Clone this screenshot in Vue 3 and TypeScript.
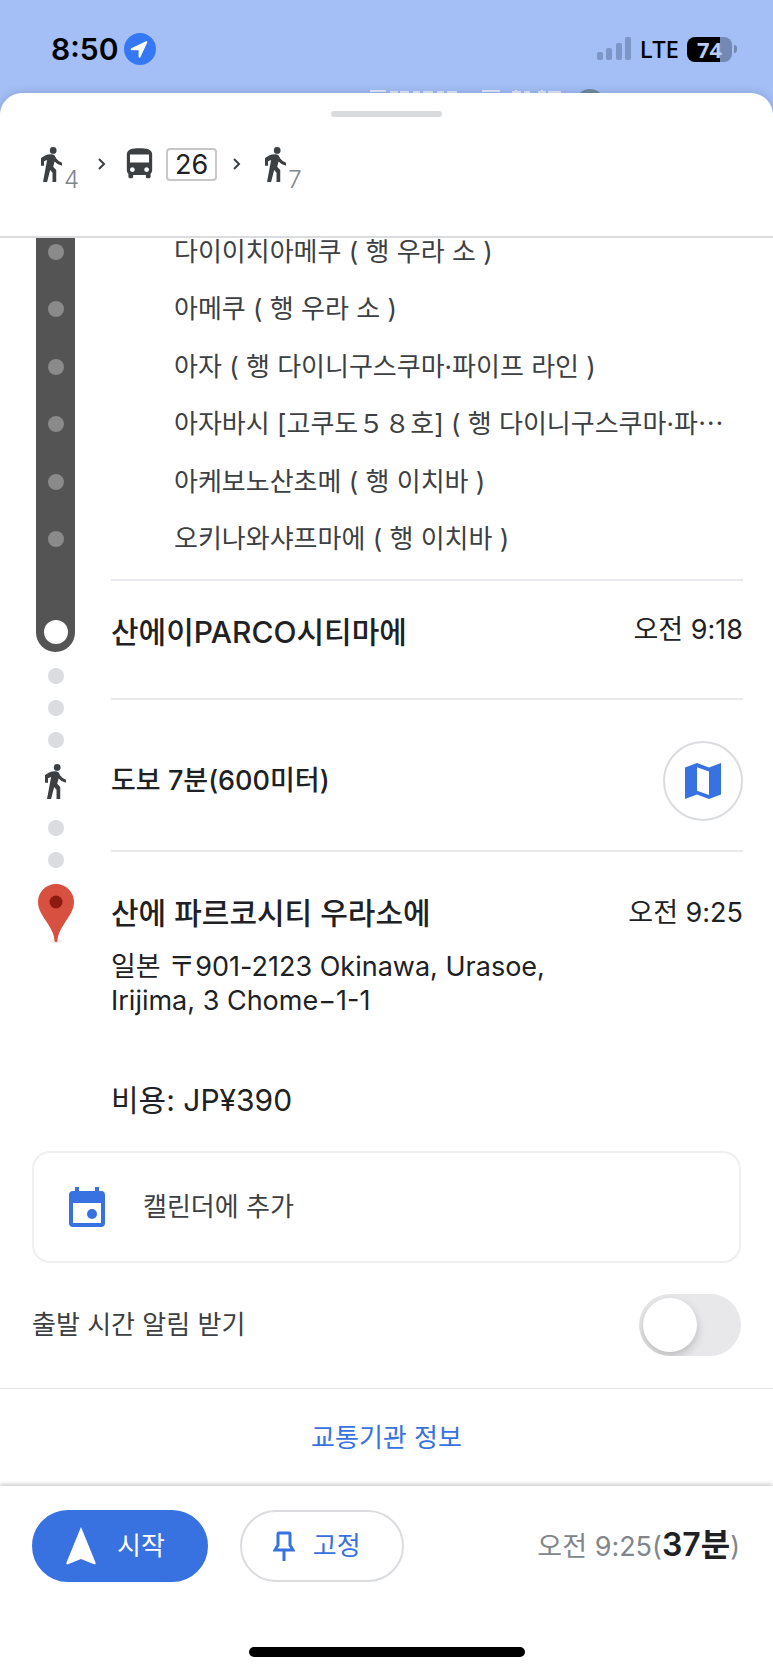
<script setup lang="ts">
import { ref } from 'vue'

const stops: string[] = [
  '다이이치아메쿠 ( 행 우라 소 )',
  '아메쿠 ( 행 우라 소 )',
  '아자 ( 행 다이니구스쿠마·파이프 라인 )',
  '아자바시 [고쿠도５８호] ( 행 다이니구스쿠마·파⋯',
  '아케보노산초메 ( 행 이치바 )',
  '오키나와샤프마에 ( 행 이치바 )',
]

const walkPath =
  'M46 10a10 10 0 1 1-20 0 10 10 0 0 1 20 0zM0 32l12-7q14-6 24-3 5 2 9 12 5 8 17 12v9q-15-3-22-12l-4 15 9 10v35H34V76l-7-8-9 35H6l12-65-9 4v13H0z'

const notify = ref(false)
</script>

<template>
  <div class="screen" lang="ko">
    <div class="map">
      <div class="status">
        <div class="clock">
          <span class="time">8:50</span>
          <svg class="location" viewBox="0 0 32 32" aria-hidden="true">
            <circle cx="16" cy="16" r="16" fill="#3478f6" />
            <path d="M7.3 15.2 22 8.3c.9-.4 1.6.3 1.2 1.2l-6.8 14.7c-.5 1-1.8.7-1.8-.4v-6.1c0-.3-.1-.4-.4-.4H7.8c-1.2 0-1.5-1.5-.5-2.1z" fill="#fff" />
          </svg>
        </div>
        <div class="signals">
          <svg class="bars" viewBox="0 0 35 24" aria-hidden="true">
            <rect x="0" y="15" width="6" height="8" rx="2" />
            <rect x="9" y="11" width="6" height="12" rx="2" />
            <rect x="19" y="6" width="6" height="17" rx="2" />
            <rect x="28" y="0" width="6" height="23" rx="2" />
          </svg>
          <span class="network">LTE</span>
          <span class="battery">
            <span class="cell">74</span>
            <span class="nub"></span>
          </span>
        </div>
      </div>
      <svg class="labels" viewBox="0 0 240 5" aria-hidden="true">
        <path d="M0 2h16M20 3h8M30 3h9M43 3h7M53 3h10M67 3h7M77 3h10M112 2h18M142 3h9M146 1v3M154 3h6M168 3h8M172 1v3M178 3h13" stroke="#e6eefc" stroke-width="2" fill="none" />
        <circle cx="220" cy="15" r="15" fill="#6f8a9c" />
      </svg>
    </div>

    <main class="sheet">
      <header class="summary">
        <div class="handle"></div>
        <div class="route">
          <span class="walk">
            <svg class="man" viewBox="0 0 62 103" aria-hidden="true"><path :d="walkPath" /></svg>
            <sub>4</sub>
          </span>
          <svg class="chevron" viewBox="0 0 10 14" aria-hidden="true"><path d="M2 2l5 5-5 5" /></svg>
          <svg class="bus" viewBox="3 0 18 24" aria-hidden="true">
            <path d="M4 16c0 .88.39 1.67 1 2.22V20c0 .55.45 1 1 1h1c.55 0 1-.45 1-1v-1h8v1c0 .55.45 1 1 1h1c.55 0 1-.45 1-1v-1.78c.61-.55 1-1.34 1-2.22V6c0-3.5-3.58-4-8-4s-8 .5-8 4v10zm3.5 1c-.83 0-1.5-.67-1.5-1.5S6.67 14 7.5 14s1.5.67 1.5 1.5S8.33 17 7.5 17zm9 0c-.83 0-1.5-.67-1.5-1.5s.67-1.5 1.5-1.5 1.5.67 1.5 1.5-.67 1.5-1.5 1.5zm1.5-6H6V6h12v5z" />
          </svg>
          <span class="line">26</span>
          <svg class="chevron" viewBox="0 0 10 14" aria-hidden="true"><path d="M2 2l5 5-5 5" /></svg>
          <span class="walk">
            <svg class="man" viewBox="0 0 62 103" aria-hidden="true"><path :d="walkPath" /></svg>
            <sub>7</sub>
          </span>
        </div>
      </header>

      <section class="itinerary">
        <div class="rail" aria-hidden="true">
          <div class="track">
            <div class="ticks">
              <i v-for="stop in stops" :key="stop" class="dot"></i>
            </div>
            <i class="terminus"></i>
          </div>
          <div class="dots">
            <i class="dot"></i>
            <i class="dot"></i>
            <i class="dot"></i>
          </div>
          <svg class="man on-foot" viewBox="0 0 62 103"><path :d="walkPath" /></svg>
          <div class="dots">
            <i class="dot"></i>
            <i class="dot"></i>
          </div>
          <svg class="pin" viewBox="0 0 36 60">
            <ellipse cx="18" cy="57" rx="6" ry="2" fill="#f1edec" />
            <path d="M18 0C8 0 0 8 0 18c0 7 3.5 12 8 19 4.5 7 8 12 8.6 20 .1 1.4 2.7 1.4 2.8 0C20 49 23.5 44 28 37c4.5-7 8-12 8-19C36 8 28 0 18 0z" fill="#d85140" />
            <circle cx="18" cy="18" r="6.5" fill="#8c1a11" />
          </svg>
        </div>

        <div class="steps">
          <ol class="stops">
            <li v-for="stop in stops" :key="stop">{{ stop }}</li>
          </ol>
          <div class="step arrival">
            <h2>산에이PARCO시티마에</h2>
            <time>오전 9:18</time>
          </div>
          <div class="step transfer">
            <p>도보 7분(600미터)</p>
            <button class="map-button" type="button" aria-label="지도">
              <svg viewBox="0 0 36 36" aria-hidden="true">
                <path fill-rule="evenodd" d="M0 4.5 12 0l12 4.500L36 0v31.500L24 36l-12-4.500L0 36zM12 4.300v23.400L24 32V8.600z" />
              </svg>
            </button>
          </div>
          <div class="step destination">
            <h2>산에 파르코시티 우라소에</h2>
            <time>오전 9:25</time>
          </div>
          <address>일본 〒901-2123 Okinawa, Urasoe,<br />Irijima, 3 Chome−1-1</address>
          <p class="fare">비용: JP¥390</p>
        </div>
      </section>

      <section class="extras">
        <button class="calendar" type="button">
          <svg viewBox="0 0 36 40" aria-hidden="true">
            <path fill-rule="evenodd" d="M6 0h4v4h16V0h4v4h2a4 4 0 0 1 4 4v28a4 4 0 0 1-4 4H4a4 4 0 0 1-4-4V8a4 4 0 0 1 4-4h2zM4 16v20h28V16z" />
            <circle cx="23" cy="27" r="5" />
          </svg>
          캘린더에 추가
        </button>
        <div class="notify">
          <label for="notify">출발 시간 알림 받기</label>
          <input id="notify" v-model="notify" type="checkbox" role="switch" />
        </div>
      </section>

      <a class="agency" href="#agency">교통기관 정보</a>

      <footer class="actions">
        <button class="primary" type="button">
          <svg class="arrow" viewBox="0 0 30 38" aria-hidden="true">
            <path d="M15 0 29.5 35.5c.5 1.4-.3 2.3-1.5 1.8L15 32 2 37.3C.8 37.8 0 36.9.5 35.5z" />
          </svg>
          시작
        </button>
        <button class="secondary" type="button">
          <svg class="tack" viewBox="0 0 22 30" aria-hidden="true">
            <path d="M6 2h10a1 1 0 0 1 1 1v11l3 5H2l3-5V3a1 1 0 0 1 1-1zM11 19v11" />
          </svg>
          고정
        </button>
        <p class="eta">오전 9:25(<strong>37분</strong>)</p>
      </footer>
      <div class="home"></div>
    </main>
  </div>
</template>

<style>
body {
  margin: 0;
}
</style>

<style scoped>
.screen {
  display: flex;
  flex-direction: column;
  min-height: 100vh;
  background: #a4bff5;
  color: #202124;
  font-family: Inter, "Noto Sans CJK KR", sans-serif;
  font-size: 26px;
  line-height: 36px;
}

h2,
p,
ol {
  margin: 0;
  padding: 0;
  font-weight: 400;
}

button {
  font: inherit;
  color: inherit;
  background: #fff;
  cursor: pointer;
}

svg {
  flex: none;
}

.map {
  position: relative;
  height: 93px;
}

.status {
  display: flex;
  justify-content: space-between;
  align-items: center;
  padding: 31px 36px 0 51px;
  color: #000;
}

.clock,
.signals {
  display: flex;
  align-items: center;
}

.clock {
  gap: 6px;
}

.time {
  font-size: 30px;
  font-weight: 600;
}

.location {
  width: 32px;
  height: 32px;
}

.signals {
  gap: 8px;
}

.bars {
  width: 35px;
  height: 24px;
  fill: #7d95c7;
}

.network {
  font-family: "Noto Sans", sans-serif;
  font-size: 24px;
  font-weight: 500;
}

.battery {
  display: flex;
  align-items: center;
  gap: 2px;
}

.cell {
  width: 45px;
  height: 25px;
  border-radius: 8px;
  background: linear-gradient(90deg, #000 74%, #7388b3 74%);
  color: #b9cdf7;
  font-family: "Noto Sans", sans-serif;
  font-size: 22px;
  font-weight: 700;
  line-height: 24px;
  text-align: center;
}

.nub {
  width: 3px;
  height: 8px;
  border-radius: 0 4px 4px 0;
  background: #7388b3;
}

.labels {
  position: absolute;
  left: 370px;
  bottom: -1px;
  width: 240px;
  height: 5px;
}

.sheet {
  position: relative;
  flex: 1;
  display: flex;
  flex-direction: column;
  border-radius: 22px 22px 0 0;
  background: #fff;
  box-shadow: 0 0 8px rgba(60, 80, 130, 0.3);
}

.summary {
  border-bottom: 2px solid #dadce0;
}

.handle {
  width: 111px;
  height: 6px;
  margin: 18px auto 28px;
  border-radius: 3px;
  background: #dadbdd;
}

.route {
  display: flex;
  align-items: center;
  height: 38px;
  padding: 0 32px 53px 36px;
  fill: #3c4043;
}

.walk {
  display: flex;
  align-items: flex-end;
  gap: 2px;
  padding: 0 3px 0 5px;
}

.man {
  width: 21px;
  height: 35px;
  fill: #3c4043;
}

.walk sub {
  height: 24px;
  margin-bottom: -10px;
  color: #80868b;
  font-size: 24px;
  font-weight: 300;
  line-height: 24px;
  vertical-align: baseline;
}

.chevron {
  width: 10px;
  height: 14px;
  margin: 0 18px 0 15px;
  fill: none;
  stroke: #3c4043;
  stroke-width: 2;
}

.bus {
  width: 29px;
  height: 38px;
}

.line {
  margin-left: 12px;
  padding: 0 7px;
  border: 2px solid #c6c8ca;
  border-radius: 4px;
  font-size: 27px;
  line-height: 29px;
}

.itinerary {
  display: flex;
  gap: 36px;
  padding: 0 30px 0 36px;
}

.rail {
  display: flex;
  flex-direction: column;
  align-items: center;
  flex: none;
  width: 39px;
}

.track {
  display: flex;
  flex-direction: column;
  align-items: center;
  justify-content: space-between;
  box-sizing: border-box;
  width: 100%;
  height: 414px;
  padding-bottom: 8px;
  border-radius: 0 0 20px 20px;
  background: #545454;
}

.ticks,
.stops {
  display: flex;
  flex-direction: column;
  justify-content: space-between;
  box-sizing: border-box;
  height: 315px;
}

.ticks {
  padding: 6px 0;
}

.dot {
  display: block;
  width: 16px;
  height: 16px;
  border-radius: 50%;
  background: #dadce0;
}

.ticks .dot {
  background: #8a8a8a;
}

.terminus {
  width: 24px;
  height: 24px;
  border-radius: 50%;
  background: #fff;
}

.dots {
  display: flex;
  flex-direction: column;
  gap: 16px;
  padding: 16px 0;
}

.on-foot {
  margin-bottom: 5px;
}

.pin {
  width: 36px;
  height: 60px;
}

.steps {
  flex: 1;
  min-width: 0;
}

.stops {
  margin-bottom: 26px;
  padding-left: 63px;
  color: #3c4043;
  line-height: 28px;
  list-style: none;
  white-space: nowrap;
}

.step {
  display: flex;
  justify-content: space-between;
  border-top: 2px solid #e8eaed;
}

.step h2 {
  font-size: 30px;
  font-weight: 500;
}

.step time {
  font-size: 27px;
  line-height: 32px;
}

.arrival {
  padding: 33px 0 48px;
}

.transfer {
  align-items: center;
  padding: 41px 0 29px;
}

.transfer p {
  font-size: 27px;
  font-weight: 500;
}

.map-button {
  display: grid;
  place-items: center;
  width: 80px;
  height: 80px;
  padding: 0;
  border: 2px solid #dadce0;
  border-radius: 50%;
}

.map-button svg {
  width: 36px;
  height: 36px;
  fill: #3871e0;
}

.destination {
  align-items: center;
  padding: 43px 0 19px;
}

address {
  font-size: 27px;
  font-style: normal;
  line-height: 34px;
}

.fare {
  padding: 64px 0 33px;
  font-size: 30px;
}

.extras {
  padding: 0 32px 32px;
  color: #3c4043;
}

.calendar {
  display: flex;
  align-items: center;
  gap: 38px;
  width: 100%;
  height: 112px;
  padding: 0 35px;
  border: 2px solid #efefef;
  border-radius: 18px;
}

.calendar svg {
  width: 36px;
  height: 40px;
  fill: #3871e0;
}

.notify {
  display: flex;
  align-items: center;
  justify-content: space-between;
  padding-top: 31px;
}

.notify input {
  appearance: none;
  width: 102px;
  height: 62px;
  margin: 0;
  padding: 4px;
  border-radius: 31px;
  background: #e8e8ea;
  overflow: hidden;
}

.notify input::before {
  content: "";
  display: block;
  width: 54px;
  height: 54px;
  border-radius: 50%;
  background: #fff;
  box-shadow: 0 4px 10px rgba(0, 0, 0, 0.2);
}

.notify input:checked {
  background: #3871e0;
}

.notify input:checked::before {
  margin-left: auto;
}

.agency {
  padding: 31px 0 30px;
  border-top: 1px solid #e4e5e7;
  color: #3871e0;
  text-align: center;
  text-decoration: none;
}

.actions {
  display: flex;
  align-items: center;
  gap: 32px;
  padding: 24px 33px 0 32px;
  box-shadow: 0 -2px 4px rgba(0, 0, 0, 0.2);
  clip-path: inset(-6px 0 0);
}

.actions button {
  display: flex;
  align-items: center;
  height: 72px;
  border: 2px solid #dadce0;
  border-radius: 36px;
}

.actions .primary {
  gap: 21px;
  padding: 0 41px 0 32px;
  border-color: #3871e0;
  background: #3871e0;
  color: #fff;
}

.arrow {
  width: 30px;
  height: 38px;
  fill: #fff;
}

.actions .secondary {
  gap: 18px;
  padding: 0 41px 0 31px;
  color: #3871e0;
}

.tack {
  width: 22px;
  height: 30px;
  fill: none;
  stroke: #3871e0;
  stroke-width: 3;
}

.eta {
  margin-left: auto;
  color: #80868b;
  font-size: 27px;
}

.eta strong {
  color: #202124;
  font-size: 32px;
  font-weight: 600;
}

.home {
  width: 276px;
  height: 10px;
  margin: 65px auto 14px;
  border-radius: 5px;
  background: #000;
}
</style>
